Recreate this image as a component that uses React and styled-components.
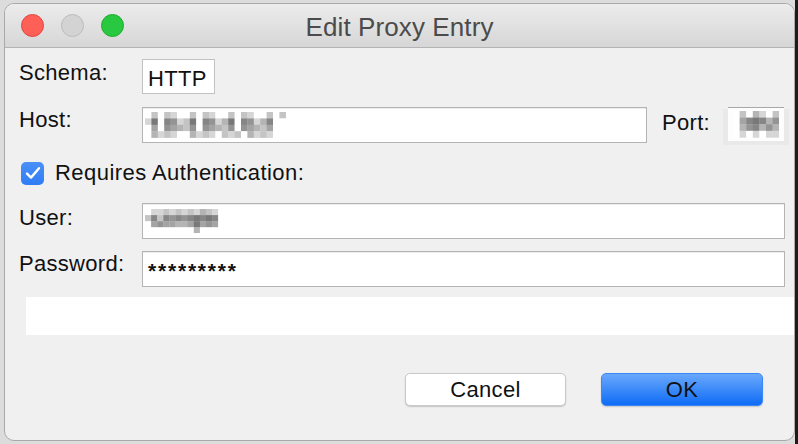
import React from "react";
import styled, { createGlobalStyle } from "styled-components";

const Global = createGlobalStyle`
  html, body { margin: 0; padding: 0; }
  body {
    width: 798px;
    height: 444px;
    overflow: hidden;
    background: #dedede;
    font-family: "Liberation Sans", Arial, sans-serif;
    color: #111;
  }
`;

const Desktop = styled.div`
  width: 798px;
  height: 444px;
  box-sizing: border-box;
  padding: 3px 3px 3px 4px;
  display: flex;
  background: linear-gradient(to right, #dcdcdc 0, #dcdcdc 795px, #1c1c1c 795px);
`;

const Window = styled.div`
  flex: 1;
  display: flex;
  flex-direction: column;
  background: #f0f0f0;
  border: 1px solid #a9a9a9;
  border-radius: 10px;
  overflow: hidden;
`;

const TitleBar = styled.div`
  height: 43px;
  flex: none;
  display: grid;
  grid-template-columns: 1fr auto 1fr;
  align-items: center;
  background: linear-gradient(to bottom, #ececec, #d6d6d6);
  border-bottom: 1px solid #b3b3b3;
`;

const Lights = styled.div`
  display: flex;
  gap: 17px;
  padding-left: 16px;
`;

const Light = styled.span`
  width: 23px;
  height: 23px;
  box-sizing: border-box;
  border-radius: 50%;
  background: ${(p) => p.$fill};
  border: 1px solid ${(p) => p.$edge};
`;

const Title = styled.div`
  font-size: 26px;
  color: #4b4b4b;
  padding-top: 3px;
  letter-spacing: 0.1px;
`;

const Content = styled.div`
  flex: 1;
  display: flex;
  flex-direction: column;
  padding: 11px 0 0 14px;
`;

const Row = styled.div`
  display: flex;
  align-items: flex-start;
  margin-top: ${(p) => p.$gap || 0}px;
  padding-right: ${(p) => p.$right || 0}px;
`;

const Label = styled.div`
  width: ${(p) => p.$w || 123}px;
  flex: none;
  font-size: 22px;
  line-height: 26px;
  padding-top: ${(p) => (p.$top == null ? 1 : p.$top)}px;
  letter-spacing: 0.3px;
`;

const SchemaBox = styled.div`
  width: 73px;
  height: 35px;
  box-sizing: border-box;
  border: 1px solid #c2c2c2;
  background: #fff;
  font-size: 22px;
  line-height: 26px;
  padding: 6px 5px 0;
  letter-spacing: 0.3px;
`;

const Field = styled.div`
  height: 36px;
  box-sizing: border-box;
  border: 1px solid #b4b4b4;
  background: #fff;
  box-shadow: inset 0 1px 0 #ececec;
  display: flex;
  align-items: center;
  padding-left: ${(p) => p.$pad || 1}px;
  ${(p) => (p.$w ? `width: ${p.$w}px; flex: none;` : "flex: 1;")}
`;

const Secret = styled.span`
  font-size: 21px;
  font-weight: bold;
  letter-spacing: 1.8px;
  padding-top: 4px;
  line-height: 24px;
  color: #111;
`;

const PortLabel = styled(Label)`
  width: auto;
  margin: 0 13px 0 15px;
`;

const PortField = styled.div`
  width: 66px;
  height: 36px;
  margin-top: 2px;
  flex: none;
  background: #e9e9e9;
  box-sizing: border-box;
  padding: 0 5px 4px;
  display: flex;
  flex-direction: column;
`;

const PortInner = styled.div`
  flex: 1;
  margin-top: -2px;
  background: #fdfdfd;
  border-top: 1px solid #a8a8a8;
  display: flex;
  align-items: center;
  padding-left: 5px;
`;

const CheckRow = styled.div`
  display: flex;
  align-items: center;
  gap: 11px;
  margin-top: 15px;
  padding-left: 2px;
`;

const CheckBox = styled.span`
  width: 23px;
  height: 23px;
  border-radius: 5px;
  background: linear-gradient(to bottom, #4a90f8, #2f7cf4);
  display: flex;
  align-items: center;
  justify-content: center;
`;

const CheckText = styled.span`
  font-size: 22px;
  line-height: 26px;
  letter-spacing: 0.45px;
`;

const Panel = styled.div`
  height: 38px;
  margin: 10px 0 0 7px;
  background: #fff;
`;

const Buttons = styled.div`
  display: flex;
  justify-content: flex-end;
  gap: 35px;
  margin-top: 38px;
  padding-right: 31px;
`;

const Button = styled.button`
  width: ${(p) => p.$w}px;
  height: 33px;
  border-radius: 5px;
  font-family: "Liberation Sans", Arial, sans-serif;
  font-size: 22px;
  color: #111;
  padding: 0;
  letter-spacing: 0.3px;
  border: ${(p) => (p.$primary ? "1px solid #3d86f5" : "1px solid #c9c9c9")};
  background: ${(p) =>
    p.$primary ? "linear-gradient(to bottom, #69a8fb, #0f6cf6)" : "#ffffff"};
  box-shadow: 0 1px 1.5px rgba(0, 0, 0, 0.18);
`;

const SHADES = [255, 232, 214, 196, 180, 164, 148, 134, 120, 106];

function Mosaic({ rows, size = 6.4 }) {
  const cols = rows[0].length;
  return (
    <svg width={cols * size} height={rows.length * size} style={{ display: "block" }}>
      {rows.map((r, y) =>
        r.split("").map((c, x) => {
          const v = SHADES[Number(c)];
          return (
            <rect
              key={`${x}-${y}`}
              x={x * size}
              y={y * size}
              width={size + 0.3}
              height={size + 0.3}
              fill={`rgb(${v},${v},${v})`}
            />
          );
        })
      )}
    </svg>
  );
}

const HOST = [
  "0303200303200303200303",
  "2807623807624807624700",
  "0506543606543606543500",
  "0423200423203230423200",
];

const USER = [
  "0223232324320",
  "3737676787870",
  "0565544585650",
  "0000000040000",
];

const PORT = ["0304203", "0578746", "0467464", "0202022"];

export default function App() {
  return (
    <>
      <Global />
      <Desktop>
        <Window>
          <TitleBar>
            <Lights>
              <Light $fill="#fe5f57" $edge="#e2463f" />
              <Light $fill="#d3d3d3" $edge="#bcbcbc" />
              <Light $fill="#28c840" $edge="#1dad2b" />
            </Lights>
            <Title>Edit Proxy Entry</Title>
            <div />
          </TitleBar>
          <Content>
            <Row>
              <Label>Schema:</Label>
              <SchemaBox>HTTP</SchemaBox>
            </Row>
            <Row $gap={13}>
              <Label $top={0}>Host:</Label>
              <Field $w={505} $pad={2}>
                <Mosaic rows={HOST} />
              </Field>
              <PortLabel $top={3}>Port:</PortLabel>
              <PortField>
                <PortInner>
                  <Mosaic rows={PORT} size={6.6} />
                </PortInner>
              </PortField>
            </Row>
            <CheckRow>
              <CheckBox>
                <svg width="16" height="14" viewBox="0 0 16 14">
                  <path
                    d="M2 7.6 L6 11.6 L14 2.2"
                    fill="none"
                    stroke="#fff"
                    strokeWidth="2.4"
                    strokeLinecap="round"
                    strokeLinejoin="round"
                  />
                </svg>
              </CheckBox>
              <CheckText>Requires Authentication:</CheckText>
            </CheckRow>
            <Row $gap={17} $right={9}>
              <Label $top={2}>User:</Label>
              <Field $pad={2}>
                <Mosaic rows={USER} size={6.1} />
              </Field>
            </Row>
            <Row $gap={12} $right={9}>
              <Label $top={0}>Password:</Label>
              <Field $pad={5}>
                <Secret>*********</Secret>
              </Field>
            </Row>
            <Panel />
            <Buttons>
              <Button $w={161}>Cancel</Button>
              <Button $w={162} $primary>
                OK
              </Button>
            </Buttons>
          </Content>
        </Window>
      </Desktop>
    </>
  );
}
